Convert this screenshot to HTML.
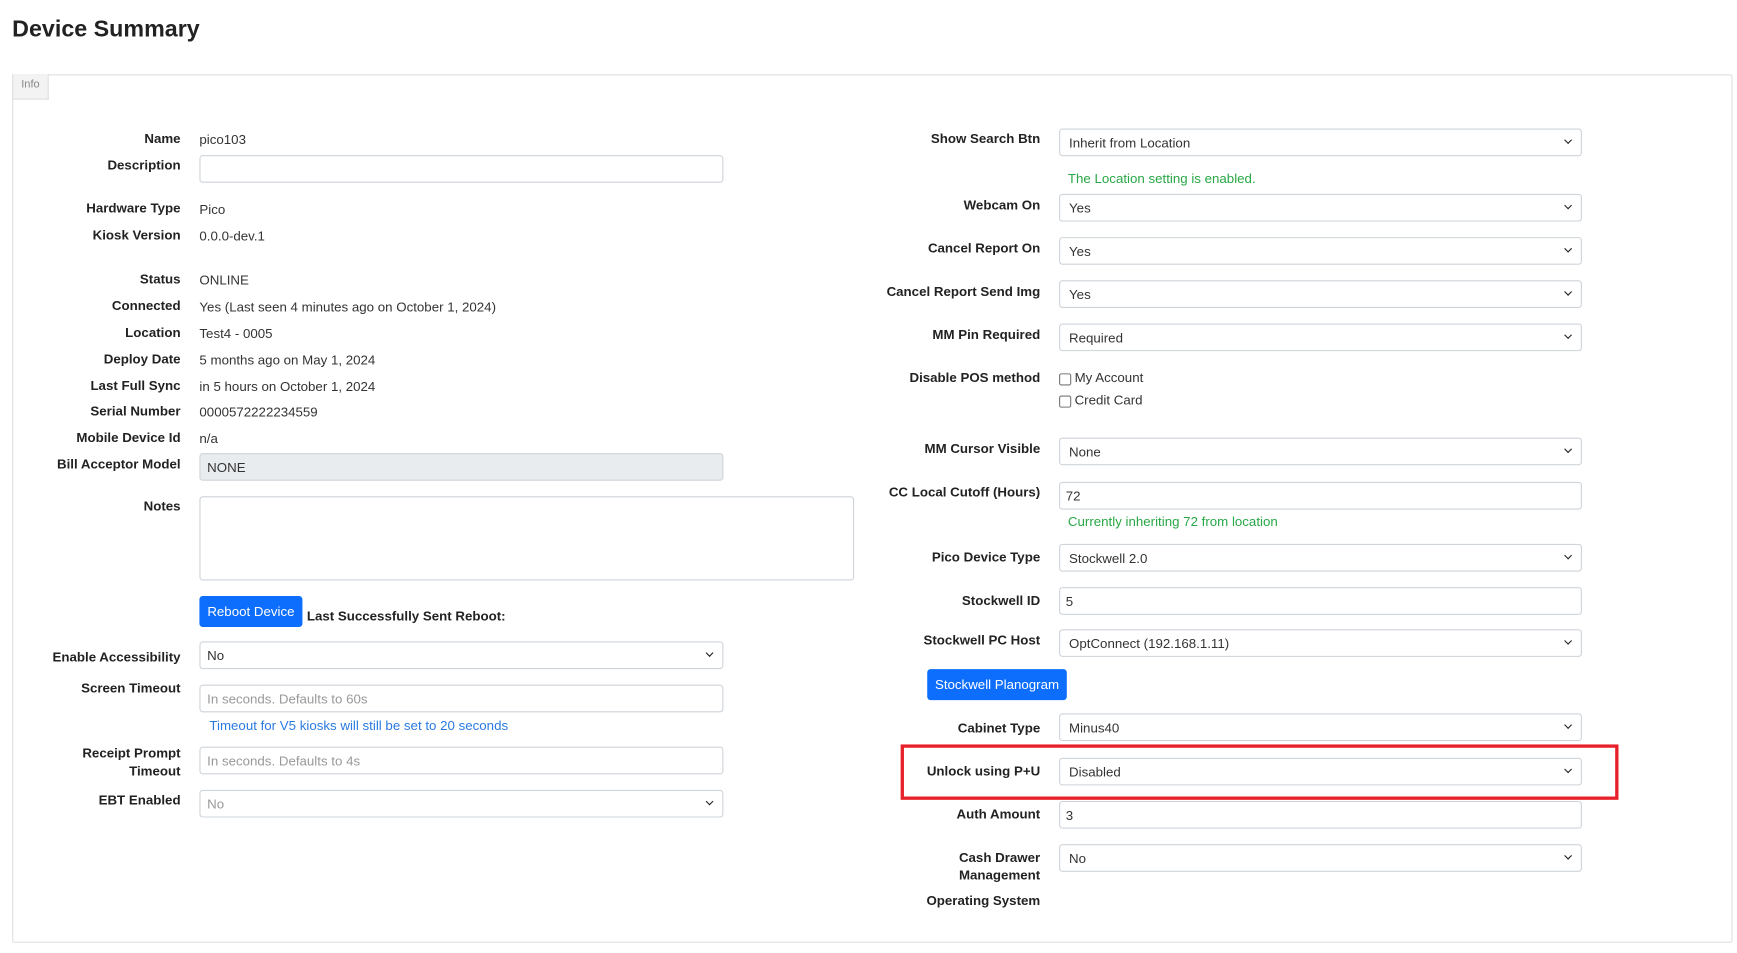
<!DOCTYPE html>
<html><head><meta charset="utf-8"><style>
html,body{margin:0;padding:0;background:#fff;width:1737px;height:953px;overflow:hidden}
#w{position:absolute;left:0;top:0;width:1568px;height:860px;transform:scale(1.1078);transform-origin:0 0;font-family:"Liberation Sans",Arial,sans-serif;color:#222;font-size:12px}
#w div{position:absolute;white-space:nowrap}
.l{font-weight:bold;text-align:right;line-height:16px}
.L{right:1405px}.R{right:629px}
.v{line-height:16px;left:180px;color:#333}
.i{border:1px solid #ced4da;border-radius:3px;height:23px;background:#fff;box-sizing:border-box;line-height:22px;padding-left:6px;color:#333}
.s::after{content:"";position:absolute;right:9px;top:7px;width:4px;height:4px;border-right:1.6px solid #222;border-bottom:1.6px solid #222;transform:rotate(45deg)}
.a{left:180px;width:473px}
.b{left:956px;width:472px;padding-left:8px!important}
.ph{color:#999}
.g{color:#28a745;line-height:16px}
.btn{background:#0d6efd;color:#fff;border-radius:3px;line-height:28px;text-align:center;height:28px}
.cb{width:9px;height:9px;border:1px solid #777;border-radius:2px}
</style></head><body><div id="w">
<div style="left:11px;top:15px;font-size:21px;font-weight:bold;color:#222">Device Summary</div>
<div style="left:11px;top:67px;width:1551px;height:782px;border:1px solid #dde0e3;border-radius:2px"></div>
<div style="left:11px;top:67px;width:31px;height:22px;background:#f3f3f3;border:1px solid #dde0e3;border-top:none;font-size:10px;color:#888;line-height:20px;text-align:center">Info</div>

<div class="l L" style="top:117px">Name</div><div class="v" style="top:118px">pico103</div>
<div class="l L" style="top:141px">Description</div><div class="i a" style="top:140px;height:25px"></div>
<div class="l L" style="top:180px">Hardware Type</div><div class="v" style="top:181px">Pico</div>
<div class="l L" style="top:204px">Kiosk Version</div><div class="v" style="top:205px">0.0.0-dev.1</div>
<div class="l L" style="top:244px">Status</div><div class="v" style="top:245px">ONLINE</div>
<div class="l L" style="top:268px">Connected</div><div class="v" style="top:269px">Yes (Last seen 4 minutes ago on October 1, 2024)</div>
<div class="l L" style="top:292px">Location</div><div class="v" style="top:293px">Test4 - 0005</div>
<div class="l L" style="top:316px">Deploy Date</div><div class="v" style="top:317px">5 months ago on May 1, 2024</div>
<div class="l L" style="top:340px">Last Full Sync</div><div class="v" style="top:341px">in 5 hours on October 1, 2024</div>
<div class="l L" style="top:363px">Serial Number</div><div class="v" style="top:364px">0000572222234559</div>
<div class="l L" style="top:387px">Mobile Device Id</div><div class="v" style="top:388px">n/a</div>
<div class="l L" style="top:411px">Bill Acceptor Model</div><div class="i a" style="top:409px;height:25px;background:#e9ecef;line-height:24px">NONE</div>
<div class="l L" style="top:449px">Notes</div><div class="i" style="left:180px;width:591px;top:448px;height:76px"></div>
<div class="btn" style="left:180px;top:538px;width:93px">Reboot Device</div>
<div class="l" style="left:277px;top:548px">Last Successfully Sent Reboot:</div>
<div class="l L" style="top:585px">Enable Accessibility</div><div class="i a s" style="top:579px;height:25px;line-height:24px">No</div>
<div class="l L" style="top:613px">Screen Timeout</div><div class="i a ph" style="top:618px;height:25px;line-height:24px">In seconds. Defaults to 60s</div>
<div style="left:189px;top:647px;color:#2a7ae2;line-height:16px">Timeout for V5 kiosks will still be set to 20 seconds</div>
<div class="l L" style="top:672px">Receipt Prompt<br>Timeout</div><div class="i a ph" style="top:674px;height:25px;line-height:24px">In seconds. Defaults to 4s</div>
<div class="l L" style="top:714px">EBT Enabled</div><div class="i a s ph" style="top:713px;height:25px;line-height:24px">No</div>

<div class="l R" style="top:117px">Show Search Btn</div><div class="i b s" style="top:116px;height:25px;line-height:24px">Inherit from Location</div>
<div class="g" style="left:964px;top:153px">The Location setting is enabled.</div>
<div class="l R" style="top:177px">Webcam On</div><div class="i b s" style="top:175px;height:25px;line-height:24px">Yes</div>
<div class="l R" style="top:216px">Cancel Report On</div><div class="i b s" style="top:214px;height:25px;line-height:24px">Yes</div>
<div class="l R" style="top:255px">Cancel Report Send Img</div><div class="i b s" style="top:253px;height:25px;line-height:24px">Yes</div>
<div class="l R" style="top:294px">MM Pin Required</div><div class="i b s" style="top:292px;height:25px;line-height:24px">Required</div>
<div class="l R" style="top:333px">Disable POS method</div>
<div class="cb" style="left:956px;top:337px"></div><div class="v" style="left:970px;top:333px">My Account</div>
<div class="cb" style="left:956px;top:357px"></div><div class="v" style="left:970px;top:353px">Credit Card</div>
<div class="l R" style="top:397px">MM Cursor Visible</div><div class="i b s" style="top:395px;height:25px;line-height:24px">None</div>
<div class="l R" style="top:436px">CC Local Cutoff (Hours)</div><div class="i b" style="top:435px;height:25px;line-height:24px;padding-left:5px!important">72</div>
<div class="g" style="left:964px;top:463px">Currently inheriting 72 from location</div>
<div class="l R" style="top:495px">Pico Device Type</div><div class="i b s" style="top:491px;height:25px;line-height:24px">Stockwell 2.0</div>
<div class="l R" style="top:534px">Stockwell ID</div><div class="i b" style="top:530px;height:25px;line-height:24px;padding-left:5px!important">5</div>
<div class="l R" style="top:570px">Stockwell PC Host</div><div class="i b s" style="top:568px;height:25px;line-height:24px">OptConnect (192.168.1.11)</div>
<div class="btn" style="left:837px;top:604px;width:126px">Stockwell Planogram</div>
<div class="l R" style="top:649px">Cabinet Type</div><div class="i b s" style="top:644px;height:25px;line-height:24px">Minus40</div>
<div style="left:813px;top:672px;width:642px;height:44px;border:3px solid #e8202a"></div>
<div class="l R" style="top:688px">Unlock using P+U</div><div class="i b s" style="top:684px;height:25px;line-height:24px">Disabled</div>
<div class="l R" style="top:727px">Auth Amount</div><div class="i b" style="top:723px;height:25px;line-height:24px;padding-left:5px!important">3</div>
<div class="l R" style="top:766px">Cash Drawer<br>Management</div><div class="i b s" style="top:762px;height:25px;line-height:24px">No</div>
<div class="l R" style="top:805px">Operating System</div>
</div></body></html>
